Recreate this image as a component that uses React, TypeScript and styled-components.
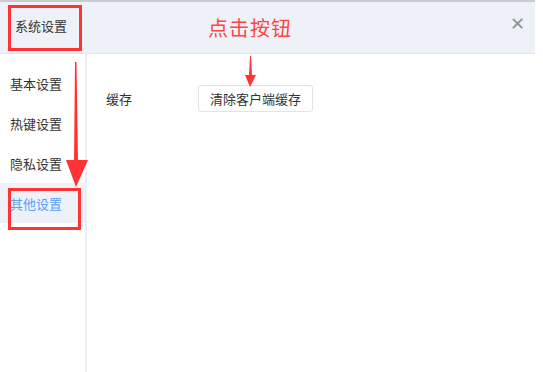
import React from "react";
import styled, { createGlobalStyle } from "styled-components";

const GlobalStyle = createGlobalStyle`
  html, body {
    margin: 0;
    padding: 0;
    background: #ffffff;
    font-family: "Noto Sans CJK SC", "Noto Sans", sans-serif;
  }
`;

const Dialog = styled.div`
  position: relative;
  width: 535px;
  height: 372px;
  display: flex;
  flex-direction: column;
  border-top: 2px solid #c9ccd2;
  box-sizing: border-box;
  overflow: hidden;
`;

const Header = styled.div`
  height: 51px;
  flex: none;
  display: flex;
  align-items: center;
  justify-content: space-between;
  padding: 0 10px 0 15px;
  background: #eef2f8;
  border-bottom: 1px solid #e1e5ec;
`;

const Title = styled.span`
  font-size: 13px;
  color: #333;
  margin-top: -5px;
`;

const Close = styled.span`
  font-family: "DejaVu Sans", sans-serif;
  font-size: 18px;
  color: #8b929b;
  line-height: 1;
  margin-top: -8px;
`;

const Body = styled.div`
  flex: 1;
  display: flex;
`;

const Sidebar = styled.div`
  width: 85px;
  flex: none;
  padding-top: 9px;
  border-right: 2px solid #eceef5;
`;

const MenuItem = styled.div<{ $active?: boolean }>`
  height: 40px;
  display: flex;
  align-items: center;
  padding-left: 10px;
  font-size: 13px;
  color: ${(p) => (p.$active ? "#5c9ff0" : "#333")};
  background: ${(p) => (p.$active ? "#eef2f8" : "transparent")};
`;

const Content = styled.div`
  flex: 1;
  padding: 31px 0 0 19px;
`;

const Row = styled.div`
  display: flex;
  align-items: center;
`;

const Label = styled.span`
  width: 92px;
  font-size: 13px;
  color: #333;
`;

const Button = styled.button`
  height: 27px;
  padding: 0 11px;
  background: #fff;
  border: 1px solid #e0e3e8;
  border-radius: 3px;
  font-family: "Noto Sans CJK SC", sans-serif;
  font-size: 13px;
  color: #333;
`;

const Mark = styled.div<{ $x: number; $y: number; $w: number; $h: number }>`
  position: absolute;
  left: ${(p) => p.$x}px;
  top: ${(p) => p.$y}px;
  width: ${(p) => p.$w}px;
  height: ${(p) => p.$h}px;
  border: 3px solid #ff3333;
  box-sizing: border-box;
  pointer-events: none;
`;

const Note = styled.span`
  position: absolute;
  left: 208px;
  top: 11px;
  font-size: 20px;
  color: #ff4444;
  letter-spacing: 1px;
`;

const Overlay = styled.svg`
  position: absolute;
  left: 0;
  top: 0;
  pointer-events: none;
`;

export default function App() {
  return (
    <>
      <GlobalStyle />
      <Dialog>
        <Header>
          <Title>系统设置</Title>
          <Close>✕</Close>
        </Header>
        <Body>
          <Sidebar>
            <MenuItem>基本设置</MenuItem>
            <MenuItem>热键设置</MenuItem>
            <MenuItem>隐私设置</MenuItem>
            <MenuItem $active>其他设置</MenuItem>
          </Sidebar>
          <Content>
            <Row>
              <Label>缓存</Label>
              <Button>清除客户端缓存</Button>
            </Row>
          </Content>
        </Body>

        {/* annotations */}
        <Mark $x={8} $y={3} $w={74} $h={46} />
        <Mark $x={8} $y={186} $w={73} $h={42} />
        <Note>点击按钮</Note>
        <Overlay width="543" height="372" viewBox="0 0 543 372">
          <polygon points="75,60 76.5,60 78,158 88,158 76,185 66,158 74,158" fill="#ff3333" />
          <polygon points="250,54 251,54 252,73 256,73 250,85 245,73 249,73" fill="#ff3333" />
        </Overlay>
      </Dialog>
    </>
  );
}
